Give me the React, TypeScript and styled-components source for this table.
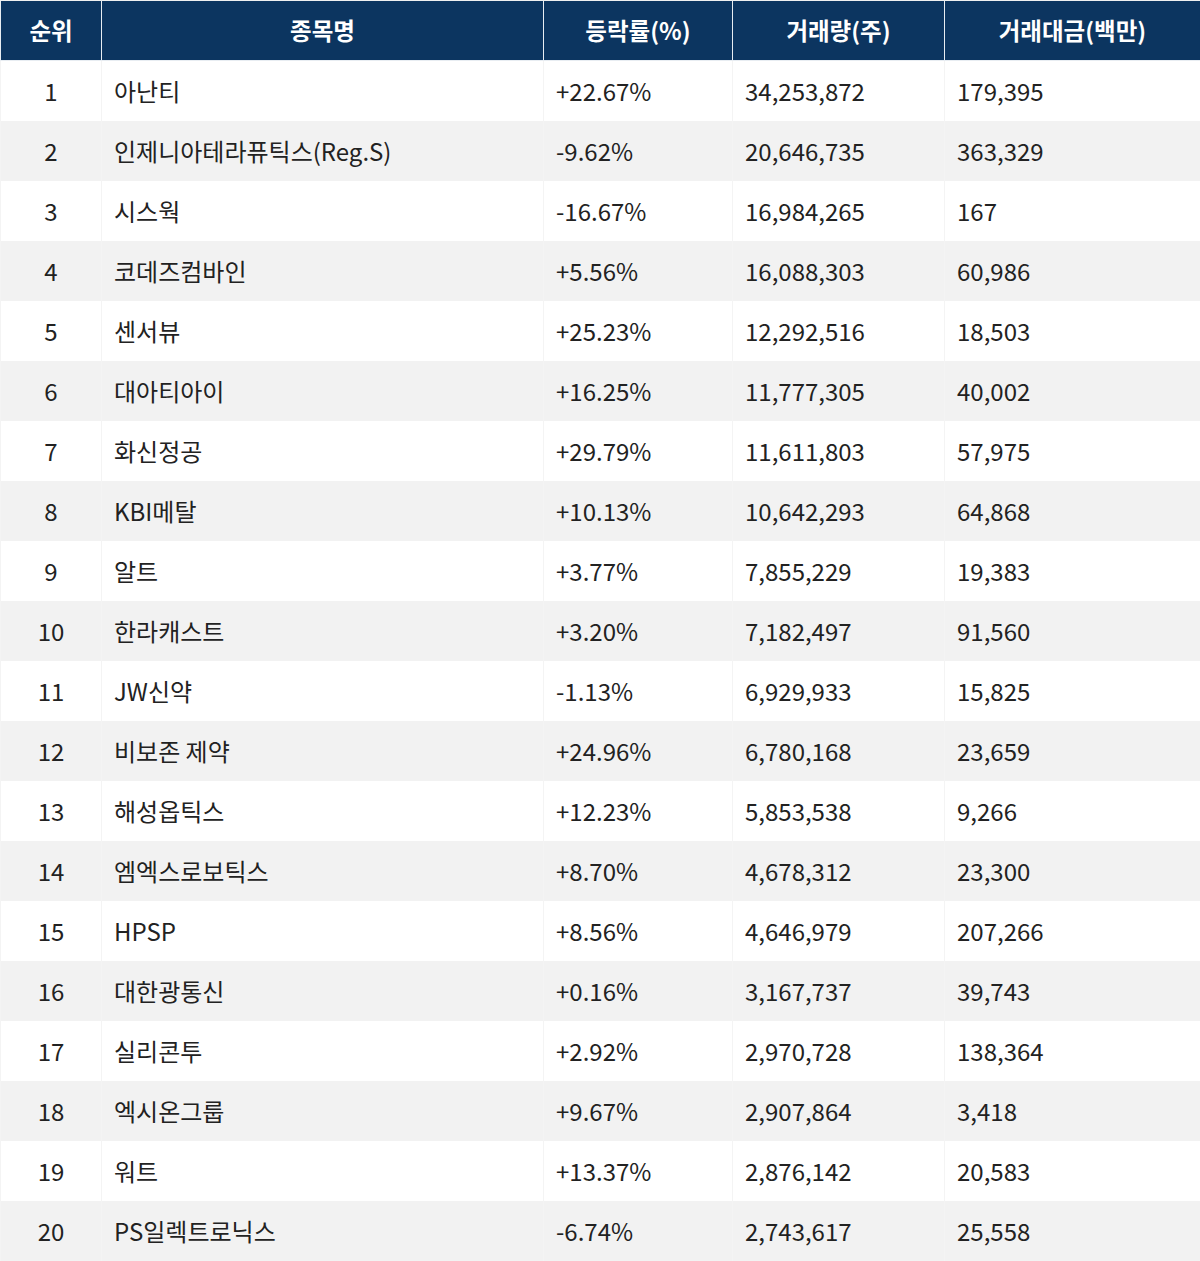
import styled, {createGlobalStyle} from "styled-components";

type Row = {
    rank: number;
    name: string;
    rate: string;
    volume: string;
    amount: string;
}

const rows: Row[] = [
    {rank: 1, name: "아난티", rate: "+22.67%", volume: "34,253,872", amount: "179,395"},
    {rank: 2, name: "인제니아테라퓨틱스(Reg.S)", rate: "-9.62%", volume: "20,646,735", amount: "363,329"},
    {rank: 3, name: "시스웍", rate: "-16.67%", volume: "16,984,265", amount: "167"},
    {rank: 4, name: "코데즈컴바인", rate: "+5.56%", volume: "16,088,303", amount: "60,986"},
    {rank: 5, name: "센서뷰", rate: "+25.23%", volume: "12,292,516", amount: "18,503"},
    {rank: 6, name: "대아티아이", rate: "+16.25%", volume: "11,777,305", amount: "40,002"},
    {rank: 7, name: "화신정공", rate: "+29.79%", volume: "11,611,803", amount: "57,975"},
    {rank: 8, name: "KBI메탈", rate: "+10.13%", volume: "10,642,293", amount: "64,868"},
    {rank: 9, name: "알트", rate: "+3.77%", volume: "7,855,229", amount: "19,383"},
    {rank: 10, name: "한라캐스트", rate: "+3.20%", volume: "7,182,497", amount: "91,560"},
    {rank: 11, name: "JW신약", rate: "-1.13%", volume: "6,929,933", amount: "15,825"},
    {rank: 12, name: "비보존 제약", rate: "+24.96%", volume: "6,780,168", amount: "23,659"},
    {rank: 13, name: "해성옵틱스", rate: "+12.23%", volume: "5,853,538", amount: "9,266"},
    {rank: 14, name: "엠엑스로보틱스", rate: "+8.70%", volume: "4,678,312", amount: "23,300"},
    {rank: 15, name: "HPSP", rate: "+8.56%", volume: "4,646,979", amount: "207,266"},
    {rank: 16, name: "대한광통신", rate: "+0.16%", volume: "3,167,737", amount: "39,743"},
    {rank: 17, name: "실리콘투", rate: "+2.92%", volume: "2,970,728", amount: "138,364"},
    {rank: 18, name: "엑시온그룹", rate: "+9.67%", volume: "2,907,864", amount: "3,418"},
    {rank: 19, name: "워트", rate: "+13.37%", volume: "2,876,142", amount: "20,583"},
    {rank: 20, name: "PS일렉트로닉스", rate: "-6.74%", volume: "2,743,617", amount: "25,558"},
];

const GlobalStyle = createGlobalStyle`
    body {
        margin: 0;
        background: #ffffff;
        font-family: "Noto Sans CJK KR", "Noto Sans", sans-serif;
    }
`

const Table = styled.table`
    width: 1200px;
    table-layout: fixed;
    border-collapse: collapse;
    border: 1px solid #f0f0f0;
    color: #222222;
    font-size: 24px;
`

const HeadCell = styled.th`
    height: 57px;
    padding: 0 0 2px;
    background: #0c3560;
    color: #ffffff;
    font-weight: 700;
    font-size: 23.5px;
    text-align: center;
    border: 1px solid #e8edf2;
    border-top-color: #f0f0f0;
`

const BodyRow = styled.tr<{ $alt: boolean }>`
    background: ${p => p.$alt ? "#f2f2f2" : "#ffffff"};
`

const Cell = styled.td<{ $center?: boolean }>`
    height: 58px;
    padding: 0 0 2px 12px;
    font-weight: 400;
    text-align: ${p => p.$center ? "center" : "left"};
    border: 1px solid #f4f4f4;
    border-top: none;
    border-bottom: none;
    white-space: nowrap;
`

const RankCell = styled(Cell)`
    padding: 0 0 2px;
`

function App() {
    return <>
        <GlobalStyle/>
        <Table>
            <colgroup>
                <col style={{width: 101}}/>
                <col style={{width: 442}}/>
                <col style={{width: 189}}/>
                <col style={{width: 212}}/>
                <col style={{width: 256}}/>
            </colgroup>
            <thead>
            <tr>
                <HeadCell>순위</HeadCell>
                <HeadCell>종목명</HeadCell>
                <HeadCell>등락률(%)</HeadCell>
                <HeadCell>거래량(주)</HeadCell>
                <HeadCell>거래대금(백만)</HeadCell>
            </tr>
            </thead>
            <tbody>
            {rows.map((r, i) => (
                <BodyRow key={r.rank} $alt={i % 2 === 1}>
                    <RankCell $center>{r.rank}</RankCell>
                    <Cell>{r.name}</Cell>
                    <Cell>{r.rate}</Cell>
                    <Cell>{r.volume}</Cell>
                    <Cell>{r.amount}</Cell>
                </BodyRow>
            ))}
            </tbody>
        </Table>
    </>
}

export default App;
